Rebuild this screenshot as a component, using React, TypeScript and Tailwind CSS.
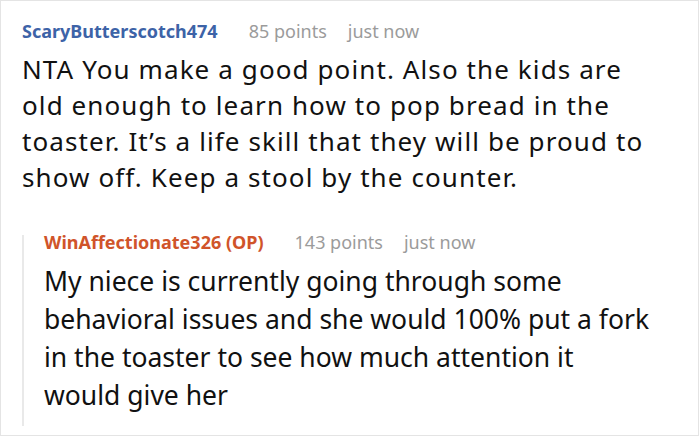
const font = { fontFamily: '"Noto Sans", "Open Sans", sans-serif' };

type HeaderProps = {
  author: string;
  authorClass: string;
  points: string;
  time: string;
  sizeClass: string;
  timeGap: string;
};

function CommentHeader({ author, authorClass, points, time, sizeClass, timeGap }: HeaderProps) {
  return (
    <div className={`flex items-center whitespace-nowrap ${sizeClass}`}>
      <span className={`font-bold ${authorClass}`}>{author}</span>
      <span className="ml-[31px] text-[#9b9b9b]">{points}</span>
      <span className={`text-[#9b9b9b] ${timeGap}`}>{time}</span>
    </div>
  );
}

export default function App() {
  return (
    <div
      className="h-[436px] w-[699px] overflow-hidden border border-[#e4e4e4] bg-white text-[#111]"
      style={font}
    >
      <div className="pl-[21px] pt-[18px]">
        <CommentHeader
          author="ScaryButterscotch474"
          authorClass="text-[#3d63a7]"
          points="85 points"
          time="just now"
          sizeClass="text-[18px] leading-[24px]"
          timeGap="ml-[21px]"
        />
        <p className="mt-[8px] whitespace-nowrap text-[26px] leading-[36px] tracking-[1.1px]">
          NTA You make a good point. Also the kids are
          <br />
          old enough to learn how to pop bread in the
          <br />
          toaster. It’s a life skill that they will be proud to
          <br />
          show off. Keep a stool by the counter.
        </p>

        <div className="mt-[40px] border-l-2 border-[#e9e9e9] pb-[12px] pl-[20px]">
          <CommentHeader
            author="WinAffectionate326 (OP)"
            authorClass="text-[#d0542a]"
            points="143 points"
            time="just now"
            sizeClass="text-[18px] leading-[14px]"
            timeGap="ml-[21px]"
          />
          <p className="mt-[13px] whitespace-nowrap text-[26.5px] leading-[38px]">
            My niece is currently going through some
            <br />
            behavioral issues and she would 100% put a fork
            <br />
            in the toaster to see how much attention it
            <br />
            would give her
          </p>
        </div>
      </div>
    </div>
  );
}
